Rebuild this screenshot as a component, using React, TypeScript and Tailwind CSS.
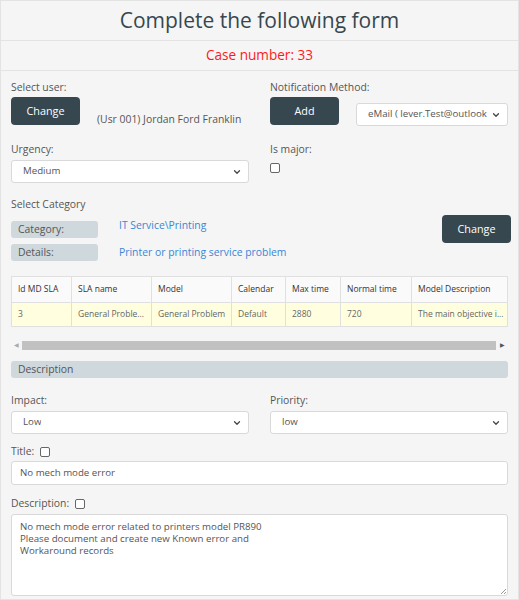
import { ChevronDown } from "lucide-react";

const font = { fontFamily: '"Open Sans", "Noto Sans", sans-serif' };

function Select({ value, className = "" }: { value: string; className?: string }) {
  return (
    <div
      className={
        "flex h-[23px] items-center justify-between rounded-[3px] border border-[#d9d9d9] bg-white pl-[11px] pr-[6px] text-[9.7px] text-[#555] " +
        className
      }
    >
      <span className="truncate">{value}</span>
      <ChevronDown className="h-[10px] w-[10px] shrink-0 text-[#444]" strokeWidth={3} />
    </div>
  );
}

function Box() {
  return <span className="inline-block h-[10px] w-[10px] rounded-[2px] border border-[#666] bg-white" />;
}

function DarkButton({ children, className = "" }: { children: string; className?: string }) {
  return (
    <button
      className={
        "flex h-[28px] w-[69px] shrink-0 items-center justify-center rounded-[4px] bg-[#37474f] text-[10.8px] text-white " +
        className
      }
    >
      {children}
    </button>
  );
}

const cols = [
  { h: "Id MD SLA", v: "3", w: "w-[59px]" },
  { h: "SLA name", v: "General Proble...", w: "w-[80px]" },
  { h: "Model", v: "General Problem", w: "w-[80px]" },
  { h: "Calendar", v: "Default", w: "w-[54px]" },
  { h: "Max time", v: "2880", w: "w-[55px]" },
  { h: "Normal time", v: "720", w: "w-[71px]" },
  { h: "Model Description", v: "The main objective i...", w: "flex-1" },
];

export default function App() {
  return (
    <div style={font} className="min-h-[600px] w-[519px] border border-[#e3e3e3] bg-[#f5f5f5] text-[#555]">
      <div className="flex h-[40px] items-center justify-center border-b border-[#e3e3e3] text-[21px] text-[#37474f]">
        Complete the following form
      </div>
      <div className="flex h-[30px] items-center justify-center border-b border-[#e3e3e3] text-[13.6px] text-[#ff1a1a]">
        Case number: 33
      </div>

      <div className="px-[10px] pt-[8px] text-[10.4px]">
        <div className="grid grid-cols-2 gap-x-[21px]">
          <div>
            <div className="leading-[17px]">Select user:</div>
            <div className="flex items-end">
              <DarkButton className="mt-[1px]">Change</DarkButton>
              <span className="mb-[-3px] ml-[17px] whitespace-nowrap">(Usr 001) Jordan Ford Franklin</span>
            </div>
          </div>
          <div>
            <div className="leading-[17px]">Notification Method:</div>
            <div className="flex items-start">
              <DarkButton className="mt-[1px]">Add</DarkButton>
              <Select value="eMail ( lever.Test@outlook" className="ml-[17px] mt-[7px] min-w-0 flex-1" />
            </div>
          </div>

          <div className="mt-[15px]">
            <div className="leading-[17px]">Urgency:</div>
            <Select value="Medium" className="mt-[2px]" />
          </div>
          <div className="mt-[15px]">
            <div className="leading-[17px]">Is major:</div>
            <div className="mt-[5px] flex">
              <Box />
            </div>
          </div>
        </div>

        <div className="mt-[13px] leading-[17px]">Select Category</div>
        <div className="mt-[8px] flex items-start">
          <div className="flex flex-col gap-[6px]">
            <div className="flex h-[17px] items-center">
              <span className="flex h-[17px] w-[87px] items-center rounded-[3px] bg-[#cfd8dc] pl-[7px]">Category:</span>
              <span className="ml-[21px] mt-[-8px] text-[#3a86d6]">IT Service\Printing</span>
            </div>
            <div className="flex h-[17px] items-center">
              <span className="flex h-[17px] w-[87px] items-center rounded-[3px] bg-[#cfd8dc] pl-[7px]">Details:</span>
              <span className="ml-[21px] text-[#3a86d6]">Printer or printing service problem</span>
            </div>
          </div>
          <DarkButton className="ml-auto mr-[-3px] mt-[-6px]">Change</DarkButton>
        </div>

        <div className="mt-[15px] flex flex-col border border-[#e0e0e0] text-[8.5px]">
          <div className="flex h-[25px] bg-[#fafafa]">
            {cols.map((c, i) => (
              <div key={c.h} className={`${c.w} flex items-center whitespace-nowrap pl-[6px] ${i ? "border-l border-[#e0e0e0]" : ""} text-[#333]`}>
                {c.h}
              </div>
            ))}
          </div>
          <div className="flex h-[24px] border-t border-[#e0e0e0] bg-[#ffffe0]">
            {cols.map((c, i) => (
              <div key={c.h} className={`${c.w} flex items-center whitespace-nowrap pl-[6px] ${i ? "border-l border-[#e0e0e0]" : ""} text-[#666]`}>
                {c.v}
              </div>
            ))}
          </div>
        </div>

        <div className="mt-[13px] flex h-[10px] items-center">
          <span className="w-[11px] text-center text-[6px] text-[#aaa]">◀</span>
          <div className="h-[9px] flex-1 bg-[#c1c1c1]" />
          <span className="w-[12px] text-center text-[6px] text-[#555]">▶</span>
        </div>

        <div className="mt-[11px] flex h-[17px] items-center rounded-[3px] bg-[#cfd8dc] pl-[7px]">Description</div>

        <div className="mt-[14px] grid grid-cols-2 gap-x-[21px]">
          <div>
            <div className="leading-[17px]">Impact:</div>
            <Select value="Low" className="mt-[2px]" />
          </div>
          <div>
            <div className="leading-[17px]">Priority:</div>
            <Select value="low" className="mt-[2px]" />
          </div>
        </div>

        <div className="mt-[9px] flex items-center gap-[6px] leading-[17px]">
          Title: <Box />
        </div>
        <div className="mt-[1px] flex h-[24px] items-center rounded-[3px] border border-[#d9d9d9] bg-white pl-[8px] text-[9.7px]">
          No mech mode error
        </div>

        <div className="mt-[10px] flex items-center gap-[6px] leading-[17px]">
          Description: <Box />
        </div>
        <div className="relative mt-[2px] h-[82px] rounded-[3px] border border-[#d9d9d9] bg-white px-[8px] pt-[6px] text-[9.7px] leading-[12px]">
          <div>No mech mode error related to printers model PR890</div>
          <div>Please document and create new Known error and</div>
          <div>Workaround records</div>
          <svg className="absolute bottom-[1px] right-[1px]" width="6" height="6" viewBox="0 0 6 6">
            <path d="M1 6 L6 1 M4 6 L6 4" stroke="#999" strokeWidth="1" />
          </svg>
        </div>
      </div>
    </div>
  );
}
